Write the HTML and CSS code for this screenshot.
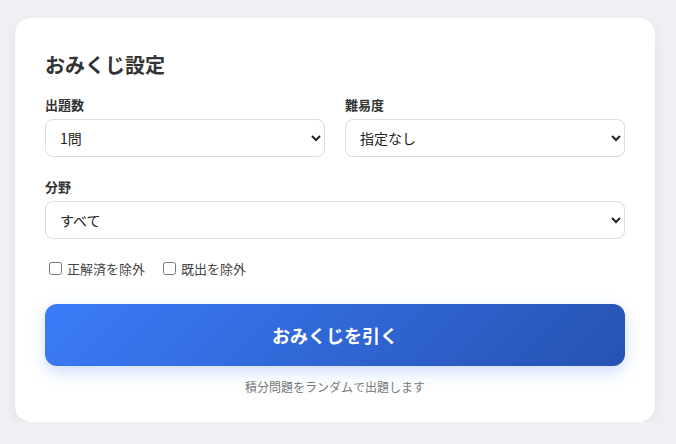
FILE: index.html
```html
<!DOCTYPE html>
<html lang="ja">

<head>
    <meta charset="UTF-8">
    <meta name="viewport" content="width=device-width, initial-scale=1.0">
    <title>おみくじ設定</title>
    <link rel="stylesheet" href="styles.css">
</head>

<body>
    <div class="card">
        <h2 class="title">おみくじ設定</h2>

        <div class="row">
            <div class="field">
                <label class="field-label" for="count">出題数</label>
                <select id="count" class="select">
                    <option>1問</option>
                    <option>3問</option>
                    <option>5問</option>
                </select>
            </div>
            <div class="field">
                <label class="field-label" for="level">難易度</label>
                <select id="level" class="select">
                    <option>指定なし</option>
                    <option>易しい</option>
                    <option>難しい</option>
                </select>
            </div>
        </div>

        <div class="field">
            <label class="field-label" for="genre">分野</label>
            <select id="genre" class="select">
                <option>すべて</option>
            </select>
        </div>

        <!-- 除外オプション -->
        <div class="checks">
            <label class="check"><input type="checkbox"> 正解済を除外</label>
            <label class="check"><input type="checkbox"> 既出を除外</label>
        </div>

        <button class="draw-btn">おみくじを引く</button>
        <p class="note">積分問題をランダムで出題します</p>
    </div>
</body>

</html>
```

FILE: styles.css
```css
body {
  margin: 0;
  padding: 18px 21px 0 15px;
  background: #eef0f4;
  font-family: "Noto Sans CJK JP", "Noto Sans", sans-serif;
  color: #333;
}

.card {
  background: #ffffff;
  border-radius: 16px;
  padding: 32px 30px 27px;
  box-shadow: 0 4px 14px rgba(0, 0, 0, 0.06);
}

.title {
  margin: 0 0 16px;
  font-size: 20px;
  font-weight: 700;
  color: #333;
}

.row {
  display: flex;
  gap: 20px;
}

.row .field {
  flex: 1;
}

.field {
  display: flex;
  flex-direction: column;
  margin-bottom: 20px;
}

.field-label {
  font-size: 13px;
  font-weight: 700;
  color: #333;
  margin-bottom: 5px;
}

.select {
  height: 38px;
  padding: 0 10px;
  font-family: inherit;
  font-size: 14px;
  color: #222;
  background: #fff;
  border: 1px solid #dcdce0;
  border-radius: 8px;
}

.checks {
  display: flex;
  gap: 14px;
  margin-top: 4px;
}

.check {
  font-size: 13px;
  color: #444;
  display: flex;
  align-items: center;
}

.check input {
  margin: 0 5px 0 4px;
  width: 13px;
  height: 13px;
}

.draw-btn {
  display: block;
  width: 100%;
  margin-top: 26px;
  padding: 18px 0;
  border: none;
  border-radius: 12px;
  background: linear-gradient(135deg, #3b7cf9, #2652b2);
  color: #fff;
  font-family: inherit;
  font-size: 18px;
  font-weight: 700;
  line-height: 26px;
  cursor: pointer;
  box-shadow: 0 6px 16px rgba(59, 123, 248, 0.25);
}

.note {
  margin: 12px 0 0;
  text-align: center;
  font-size: 12px;
  color: #777;
}
```
